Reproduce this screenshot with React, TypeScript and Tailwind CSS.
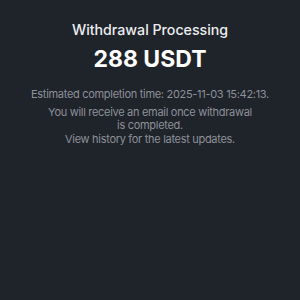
export default function App() {
  return (
    <div className="w-[300px] h-[300px] bg-[#1f232a] flex flex-col items-center pt-[20px] text-center" style={{ fontFamily: "Inter, 'Noto Sans', sans-serif" }}>
      <div className="text-[14.2px] leading-[20px] text-[#eceef0] font-medium">Withdrawal Processing</div>
      <div className="mt-[4px] text-[23px] leading-[30px] font-bold text-white">288 USDT</div>
      <div className="mt-[13px] text-[11px] leading-[14px] tracking-[-0.3px] text-[#8d9199]">Estimated completion time: 2025-11-03 15:42:13.</div>
      <div className="mt-[4.5px] w-[205px] text-[11px] leading-[13.7px] tracking-[-0.3px] text-[#8d9199]">
        You will receive an email once withdrawal is completed.
        <br />
        View history for the latest updates.
      </div>
    </div>
  );
}
